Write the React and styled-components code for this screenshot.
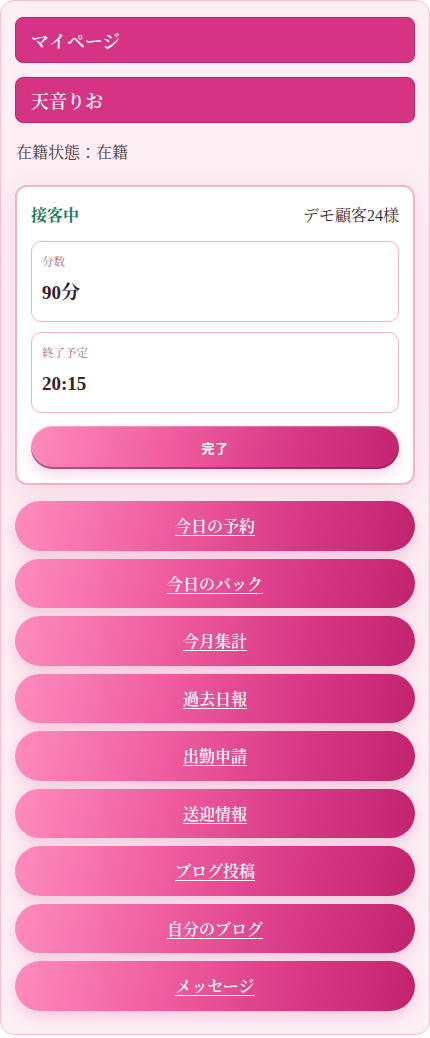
import React from "react";
import styled, { createGlobalStyle } from "styled-components";

const GlobalStyle = createGlobalStyle`
  body {
    margin: 0;
    background: #ffffff;
    font-family: "Liberation Serif", "Noto Serif CJK JP", "Noto Serif JP", "IPAexMincho", "IPAMincho", "TakaoMincho", "Noto Sans CJK JP", serif;
  }
`;

const Page = styled.div`
  width: 430px;
  min-height: 1038px;
  box-sizing: border-box;
  padding: 0 0 2px;
`;

const Container = styled.div`
  box-sizing: border-box;
  width: 430px;
  padding: 16px 14px 23px;
  background: linear-gradient(180deg, #fdf0f5 0%, #fcedf3 60%, #fdf1f6 100%);
  border: 1px solid #f6bcd2;
  border-radius: 14px;
`;

const TitleBar = styled.div`
  box-sizing: border-box;
  height: 46px;
  padding: 0 15px;
  display: flex;
  align-items: center;
  background: #d63384;
  border: 1px solid #c0276f;
  border-radius: 8px;
  color: #ffffff;
  font-size: 18px;
  font-weight: 600;
  & + & {
    margin-top: 14px;
  }
`;

const Status = styled.p`
  margin: 18px 0 20px 1px;
  font-size: 16px;
  line-height: 24px;
  color: #4a3742;
`;

const Card = styled.section`
  box-sizing: border-box;
  padding: 14px 14px 14px;
  background: #ffffff;
  border: 2px solid #f3b3ca;
  border-radius: 12px;
  box-shadow: 0 6px 22px rgba(200, 90, 140, 0.16);
`;

const CardHead = styled.div`
  display: flex;
  justify-content: space-between;
  align-items: center;
  height: 26px;
  font-size: 16px;
  margin-bottom: 14px;
`;

const Serving = styled.span`
  color: #1f7a5c;
  font-weight: 700;
`;

const Guest = styled.span`
  color: #3f3036;
`;

const Field = styled.div`
  box-sizing: border-box;
  height: 81px;
  padding: 11px 10px 0;
  border: 1px solid #f0b4cb;
  border-radius: 10px;
  & + & {
    margin-top: 10px;
  }
`;

const FieldLabel = styled.div`
  font-size: 11.5px;
  line-height: 18px;
  color: #9b6a82;
`;

const FieldValue = styled.div`
  margin-top: 9px;
  font-size: 19px;
  line-height: 26px;
  font-weight: 700;
  color: #352228;
`;

const DoneButton = styled.button`
  display: block;
  width: 100%;
  height: 43px;
  margin-top: 13px;
  border: none;
  border-radius: 22px;
  background: linear-gradient(100deg, #fd8cbc 0%, #ee5a9d 40%, #d83a86 70%, #c2246f 100%);
  box-shadow: inset 0 -2px 0 rgba(110, 40, 80, 0.55), inset 0 1px 0 rgba(255, 255, 255, 0.25),
    0 6px 14px rgba(214, 51, 132, 0.18);
  color: #ffffff;
  font-family: "Noto Sans CJK JP", sans-serif;
  font-size: 13px;
  font-weight: 700;
  letter-spacing: 0.5px;
`;

const Menu = styled.nav`
  display: flex;
  flex-direction: column;
  gap: 8px;
  margin-top: 16px;
`;

const MenuButton = styled.a`
  box-sizing: border-box;
  height: 49.5px;
  display: flex;
  align-items: center;
  justify-content: center;
  border-radius: 25px;
  background: linear-gradient(100deg, #fd8cbc 0%, #ee5a9d 40%, #d83a86 70%, #c2236f 100%);
  box-shadow: 0 6px 16px rgba(214, 51, 132, 0.2);
  color: #ffffff;
  font-size: 16px;
  font-weight: 600;
  text-decoration: underline;
  text-underline-offset: 3px;
  cursor: pointer;
`;

const menuItems = [
  "今日の予約",
  "今日のバック",
  "今月集計",
  "過去日報",
  "出勤申請",
  "送迎情報",
  "ブログ投稿",
  "自分のブログ",
  "メッセージ",
];

const App = () => {
  return (
    <Page>
      <GlobalStyle />
      <Container>
        <TitleBar>マイページ</TitleBar>
        <TitleBar>天音りお</TitleBar>
        <Status>在籍状態：在籍</Status>
        <Card>
          <CardHead>
            <Serving>接客中</Serving>
            <Guest>デモ顧客24様</Guest>
          </CardHead>
          <Field>
            <FieldLabel>分数</FieldLabel>
            <FieldValue>90分</FieldValue>
          </Field>
          <Field>
            <FieldLabel>終了予定</FieldLabel>
            <FieldValue>20:15</FieldValue>
          </Field>
          <DoneButton>完了</DoneButton>
        </Card>
        <Menu>
          {menuItems.map((item) => (
            <MenuButton key={item}>{item}</MenuButton>
          ))}
        </Menu>
      </Container>
    </Page>
  );
};

export default App;
